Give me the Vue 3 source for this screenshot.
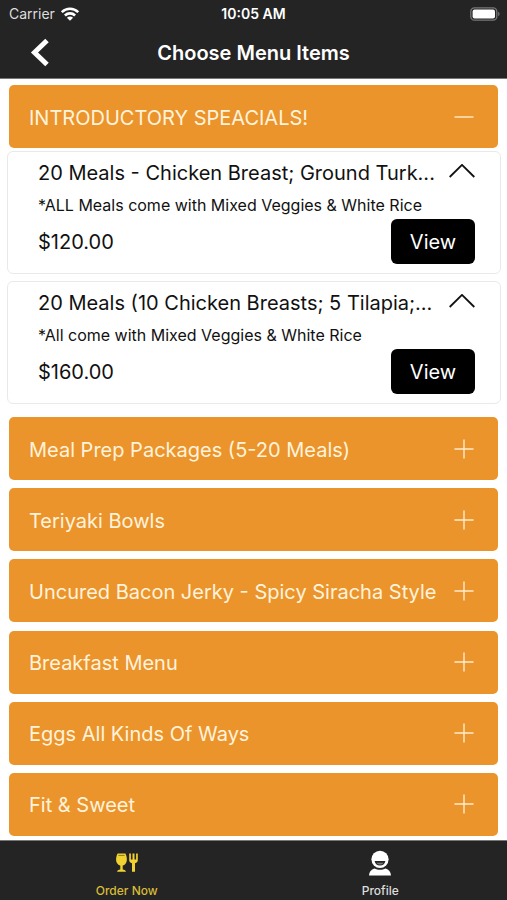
<script setup>
import { ref } from 'vue'

const specials = ref([
  {
    title: '20 Meals - Chicken Breast; Ground Turk...',
    note: '*ALL Meals come with Mixed Veggies & White Rice',
    price: '$120.00',
  },
  {
    title: '20 Meals (10 Chicken Breasts; 5 Tilapia;...',
    note: '*All come with Mixed Veggies & White Rice',
    price: '$160.00',
  },
])

const introOpen = ref(true)

const categories = [
  'Meal Prep Packages (5-20 Meals)',
  'Teriyaki Bowls',
  'Uncured Bacon Jerky - Spicy Siracha Style',
  'Breakfast Menu',
  'Eggs All Kinds Of Ways',
  'Fit & Sweet',
]
</script>

<template>
  <div class="screen">
    <header class="header">
      <div class="status">
        <div class="carrier">
          <span>Carrier</span>
          <svg class="wifi" viewBox="0 0 18 14" aria-hidden="true">
            <g fill="none" stroke="#fff" stroke-width="2.6">
              <path d="M0.8 5.2C5.4 0.6 12.6 0.6 17.2 5.2" />
              <path d="M3.9 8.5C6.8 5.7 11.2 5.7 14.1 8.5" />
            </g>
            <path d="M9 13.8L5.9 10.8C7.6 9.2 10.4 9.2 12.1 10.8Z" fill="#fff" />
          </svg>
        </div>
        <span class="time">10:05 AM</span>
        <svg class="battery" viewBox="0 0 30 14" aria-hidden="true">
          <rect x="0.8" y="0.8" width="26" height="12.4" rx="3.6" fill="none" stroke="#777" stroke-width="1.3" />
          <rect x="2.6" y="2.6" width="22.4" height="8.8" rx="2" fill="#fff" />
          <path d="M28.2 4.8C30 5.4 30 8.6 28.2 9.2Z" fill="#777" />
        </svg>
      </div>
      <div class="nav">
        <button class="back" type="button" aria-label="Back">
          <svg viewBox="0 0 20 30" aria-hidden="true">
            <path d="M17 2.5L4.5 14.5L17 26.5" fill="none" stroke="#fff" stroke-width="5" />
          </svg>
        </button>
        <h1>Choose Menu Items</h1>
      </div>
    </header>

    <main class="menu">
      <button class="panel" type="button" :aria-expanded="introOpen" @click="introOpen = !introOpen">
        <span>INTRODUCTORY SPEACIALS!</span>
        <svg class="sign" viewBox="0 0 20 20" aria-hidden="true">
          <path :d="introOpen ? 'M0.5 10H19.5' : 'M0.5 10H19.5M10 0.5V19.5'" />
        </svg>
      </button>

      <div v-if="introOpen" class="cards">
        <article v-for="item in specials" :key="item.title" class="card">
          <div class="card-top">
            <h2>{{ item.title }}</h2>
            <svg class="chevron" viewBox="0 0 26 15" aria-hidden="true">
              <path d="M0.7 13L13 0.9L25.3 13" />
            </svg>
          </div>
          <p class="note">{{ item.note }}</p>
          <div class="card-bottom">
            <span class="price">{{ item.price }}</span>
            <button class="view" type="button">View</button>
          </div>
        </article>
      </div>

      <div class="categories">
        <button v-for="name in categories" :key="name" class="panel" type="button" aria-expanded="false">
          <span>{{ name }}</span>
          <svg class="sign" viewBox="0 0 20 20" aria-hidden="true">
            <path d="M0.5 10H19.5M10 0.5V19.5" />
          </svg>
        </button>
      </div>
    </main>

    <nav class="tabs">
      <a class="tab active" href="#order">
        <svg viewBox="0 0 26 26" aria-hidden="true">
          <g fill="currentColor">
            <path d="M3.6 3.6H11.4C13.1 6.6 13.5 11.4 11.7 13.6C10.8 14.9 9.8 15.4 8.7 15.6V19.4C10.6 19.6 11.8 20.4 12 21.8H3C3.2 20.4 4.4 19.6 6.3 19.4V15.6C5.2 15.4 4.2 14.9 3.3 13.6C1.5 11.4 1.9 6.6 3.6 3.6Z" />
            <path d="M15.2 3.6H16.9V9.4H18.5V3.6H20.5V9.4H22.1V3.6H23.8V10.2C23.8 11.8 22.6 12.8 21 13.2V21.8H18V13.2C16.4 12.8 15.2 11.8 15.2 10.2Z" />
          </g>
          <path d="M4.4 5.4H10.6" stroke="#8a7a28" stroke-width="1" />
        </svg>
        <span>Order Now</span>
      </a>
      <a class="tab" href="#profile">
        <svg viewBox="0 0 26 26" aria-hidden="true">
          <circle cx="13" cy="9.3" r="8.6" fill="currentColor" />
          <path d="M7.6 11H18.4C17.8 14.2 15.8 15.6 13 15.6S8.2 14.2 7.6 11Z" fill="#242424" />
          <path d="M9.4 12.8H16.6C15.8 14 14.6 14.6 13 14.6S10.2 14 9.4 12.8Z" fill="#777" />
          <path d="M2 25.6C2.2 21.8 4.2 19.4 7.4 18.4C10.8 20.2 15.2 20.2 18.6 18.4C21.8 19.4 23.8 21.8 24 25.6Z" fill="currentColor" />
        </svg>
        <span>Profile</span>
      </a>
    </nav>
  </div>
</template>

<style>
body {
  margin: 0;
  background: #fff;
}
</style>

<style scoped>
* {
  box-sizing: border-box;
}

.screen {
  display: flex;
  flex-direction: column;
  min-height: 100vh;
  font-family: Inter, "Liberation Sans", sans-serif;
  color: #111;
}

button {
  font: inherit;
  border: 0;
  padding: 0;
  cursor: pointer;
}

.header {
  background: #242424;
  color: #fff;
  border-bottom: 1px solid #777;
}

.status {
  display: grid;
  grid-template-columns: 1fr auto 1fr;
  align-items: center;
  height: 27px;
  padding: 0 7px;
  font-size: 14px;
}

.carrier {
  display: flex;
  align-items: center;
  gap: 6px;
  padding-left: 2px;
  color: #ddd;
}

.wifi {
  width: 18px;
  height: 14px;
}

.time {
  font-weight: 600;
}

.battery {
  justify-self: end;
  width: 30px;
  height: 14px;
}

.nav {
  display: grid;
  grid-template-columns: 60px 1fr 60px;
  align-items: center;
  height: 51px;
}

.back {
  display: flex;
  justify-content: flex-end;
  padding-right: 10px;
  background: none;
}

.back svg {
  width: 20px;
  height: 30px;
}

.nav h1 {
  margin: 0;
  font-size: 20px;
  line-height: 24px;
  font-weight: 600;
  text-align: center;
}

.menu {
  flex: 1;
  display: flex;
  flex-direction: column;
  padding: 6px 0 4px;
}

.panel {
  display: flex;
  align-items: center;
  justify-content: space-between;
  height: 63px;
  margin: 0 9px;
  padding: 0 24px 0 20px;
  border-radius: 5px;
  background: #ec942c;
  color: #fff3dc;
  font-size: 20px;
  line-height: 24px;
  text-align: left;
}

.panel span {
  padding-top: 2px;
}

.sign {
  flex: none;
  width: 20px;
  height: 20px;
  fill: none;
  stroke: #ffeccb;
  stroke-width: 1.4;
}

.cards {
  display: flex;
  flex-direction: column;
  gap: 7px;
  padding: 3px 6px 0 7px;
}

.card {
  padding: 9px 25px 9px 30px;
  border: 1px solid #e9e9e9;
  border-radius: 6px;
}

.card-top {
  display: flex;
  align-items: center;
  justify-content: space-between;
  gap: 12px;
}

.card h2 {
  min-width: 0;
  margin: 0;
  overflow: hidden;
  white-space: nowrap;
  font-size: 20px;
  line-height: 24px;
  font-weight: 400;
}

.chevron {
  flex: none;
  width: 26px;
  height: 15px;
  margin-bottom: 3px;
  fill: none;
  stroke: #111;
  stroke-width: 1.8;
}

.note {
  margin: 10px 0 4px;
  font-size: 16px;
  line-height: 20px;
}

.card-bottom {
  display: flex;
  align-items: center;
  justify-content: space-between;
}

.price {
  font-size: 20px;
  line-height: 24px;
}

.view {
  width: 84px;
  height: 45px;
  border-radius: 6px;
  background: #000;
  color: #fff;
  font-size: 20px;
}

.categories {
  flex: 1;
  display: flex;
  flex-direction: column;
  justify-content: space-between;
  gap: 8px;
  padding-top: 13px;
}

.tabs {
  display: grid;
  grid-template-columns: 1fr 1fr;
  height: 60px;
  border-top: 1px solid #777;
  background: #242424;
}

.tab {
  display: flex;
  flex-direction: column;
  align-items: center;
  gap: 6px;
  padding-top: 9px;
  color: #fff;
  font-size: 12px;
  line-height: 18px;
  font-weight: 500;
  text-decoration: none;
}

.tab svg {
  width: 26px;
  height: 26px;
}

.tab span {
  color: #ddd;
}

.tab.active {
  color: #f2d230;
}

.tab.active span {
  color: #d8bc38;
}
</style>
